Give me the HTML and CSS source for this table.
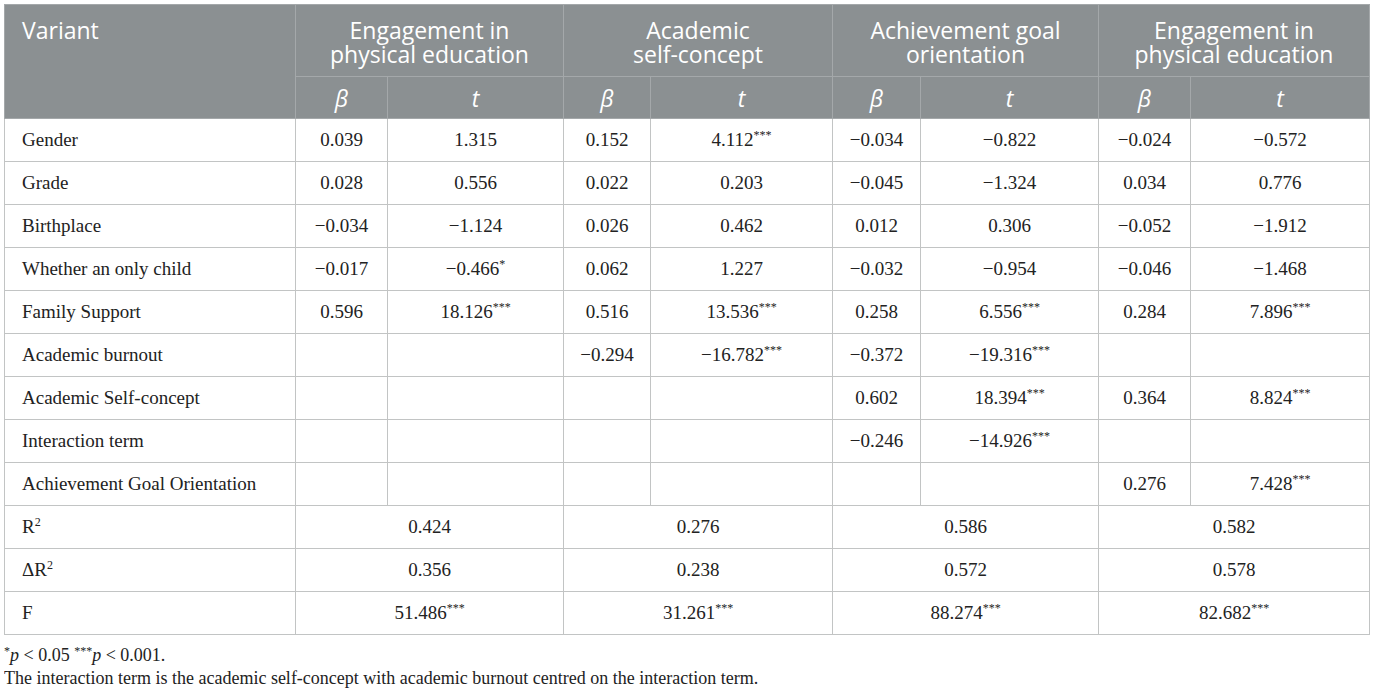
FILE: index.html
```html
<!DOCTYPE html>
<html lang="en">

<head>
    <meta charset="UTF-8">
    <meta name="viewport" content="width=device-width, initial-scale=1.0">
    <title>Regression results</title>
    <link rel="stylesheet" href="styles.css">
</head>

<body>
    <table class="results">
        <colgroup>
            <col class="c-var">
            <col class="c-b1"><col class="c-t1">
            <col class="c-b2"><col class="c-t2">
            <col class="c-b3"><col class="c-t3">
            <col class="c-b4"><col class="c-t4">
        </colgroup>
        <thead>
            <tr class="head-top">
                <th rowspan="2" class="label">Variant</th>
                <th colspan="2">Engagement in physical education</th>
                <th colspan="2">Academic <span class="nowrap">self-concept</span></th>
                <th colspan="2">Achievement goal orientation</th>
                <th colspan="2">Engagement in physical education</th>
            </tr>
            <tr class="head-sub">
                <th><i>β</i></th><th><i>t</i></th>
                <th><i>β</i></th><th><i>t</i></th>
                <th><i>β</i></th><th><i>t</i></th>
                <th><i>β</i></th><th><i>t</i></th>
            </tr>
        </thead>
        <tbody>
            <tr>
                <td class="label">Gender</td>
                <td>0.039</td><td>1.315</td>
                <td>0.152</td><td>4.112<sup>***</sup></td>
                <td>−0.034</td><td>−0.822</td>
                <td>−0.024</td><td>−0.572</td>
            </tr>
            <tr>
                <td class="label">Grade</td>
                <td>0.028</td><td>0.556</td>
                <td>0.022</td><td>0.203</td>
                <td>−0.045</td><td>−1.324</td>
                <td>0.034</td><td>0.776</td>
            </tr>
            <tr>
                <td class="label">Birthplace</td>
                <td>−0.034</td><td>−1.124</td>
                <td>0.026</td><td>0.462</td>
                <td>0.012</td><td>0.306</td>
                <td>−0.052</td><td>−1.912</td>
            </tr>
            <tr>
                <td class="label">Whether an only child</td>
                <td>−0.017</td><td>−0.466<sup>*</sup></td>
                <td>0.062</td><td>1.227</td>
                <td>−0.032</td><td>−0.954</td>
                <td>−0.046</td><td>−1.468</td>
            </tr>
            <tr>
                <td class="label">Family Support</td>
                <td>0.596</td><td>18.126<sup>***</sup></td>
                <td>0.516</td><td>13.536<sup>***</sup></td>
                <td>0.258</td><td>6.556<sup>***</sup></td>
                <td>0.284</td><td>7.896<sup>***</sup></td>
            </tr>
            <tr>
                <td class="label">Academic burnout</td>
                <td></td><td></td>
                <td>−0.294</td><td>−16.782<sup>***</sup></td>
                <td>−0.372</td><td>−19.316<sup>***</sup></td>
                <td></td><td></td>
            </tr>
            <tr>
                <td class="label">Academic Self-concept</td>
                <td></td><td></td>
                <td></td><td></td>
                <td>0.602</td><td>18.394<sup>***</sup></td>
                <td>0.364</td><td>8.824<sup>***</sup></td>
            </tr>
            <tr>
                <td class="label">Interaction term</td>
                <td></td><td></td>
                <td></td><td></td>
                <td>−0.246</td><td>−14.926<sup>***</sup></td>
                <td></td><td></td>
            </tr>
            <tr>
                <td class="label">Achievement Goal Orientation</td>
                <td></td><td></td>
                <td></td><td></td>
                <td></td><td></td>
                <td>0.276</td><td>7.428<sup>***</sup></td>
            </tr>
            <tr>
                <td class="label">R<sup>2</sup></td>
                <td colspan="2">0.424</td>
                <td colspan="2">0.276</td>
                <td colspan="2">0.586</td>
                <td colspan="2">0.582</td>
            </tr>
            <tr>
                <td class="label">ΔR<sup>2</sup></td>
                <td colspan="2">0.356</td>
                <td colspan="2">0.238</td>
                <td colspan="2">0.572</td>
                <td colspan="2">0.578</td>
            </tr>
            <tr>
                <td class="label">F</td>
                <td colspan="2">51.486<sup>***</sup></td>
                <td colspan="2">31.261<sup>***</sup></td>
                <td colspan="2">88.274<sup>***</sup></td>
                <td colspan="2">82.682<sup>***</sup></td>
            </tr>
        </tbody>
    </table>

    <!-- Table notes -->
    <div class="notes">
        <p><sup>*</sup><i>p</i> &lt; 0.05 <sup>***</sup><i>p</i> &lt; 0.001.</p>
        <p>The interaction term is the academic self-concept with academic burnout centred on the interaction term.</p>
    </div>
</body>

</html>
```

FILE: styles.css
```css
body {
    margin: 4px;
    padding: 0;
    background-color: white;
    color: #222;
    font-family: 'Liberation Serif', 'Times New Roman', serif;
}

.results {
    width: 1365px;
    table-layout: fixed;
    border-collapse: collapse;
    border: 1px solid #c2c4c4;
}

.c-var { width: 291px; }
.c-b1 { width: 92px; }
.c-t1 { width: 176px; }
.c-b2 { width: 87px; }
.c-t2 { width: 182px; }
.c-b3 { width: 88px; }
.c-t3 { width: 178px; }
.c-b4 { width: 92px; }
.c-t4 { width: 179px; }

/* Header block */
.results th {
    background-color: #8b9092;
    color: white;
    font-family: 'Open Sans', 'Noto Sans', sans-serif;
    font-weight: 400;
    font-size: 23px;
    line-height: 24px;
    text-align: center;
    vertical-align: top;
    border: 1px solid #a4a8aa;
    padding: 13px 20px 0;
}

.nowrap {
    white-space: nowrap;
}

.head-top th {
    height: 58px;
}

.head-sub th {
    height: 41px;
    padding: 0 10px;
    vertical-align: middle;
}

.results th.label {
    text-align: left;
    padding-left: 17px;
}

/* Body cells */
.results td {
    height: 42px;
    padding: 0 10px;
    font-size: 19px;
    text-align: center;
    vertical-align: middle;
    border: 1px solid #c2c4c4;
}

.results td.label {
    text-align: left;
    padding-left: 17px;
}

.results sup {
    font-size: 12px;
    line-height: 0;
    vertical-align: 7px;
}

.notes {
    margin-top: 9px;
    font-size: 18px;
    color: #222;
}

.notes p {
    margin: 0;
    line-height: 23px;
}

.notes sup {
    font-size: 12px;
    line-height: 0;
    vertical-align: 6px;
}
```
